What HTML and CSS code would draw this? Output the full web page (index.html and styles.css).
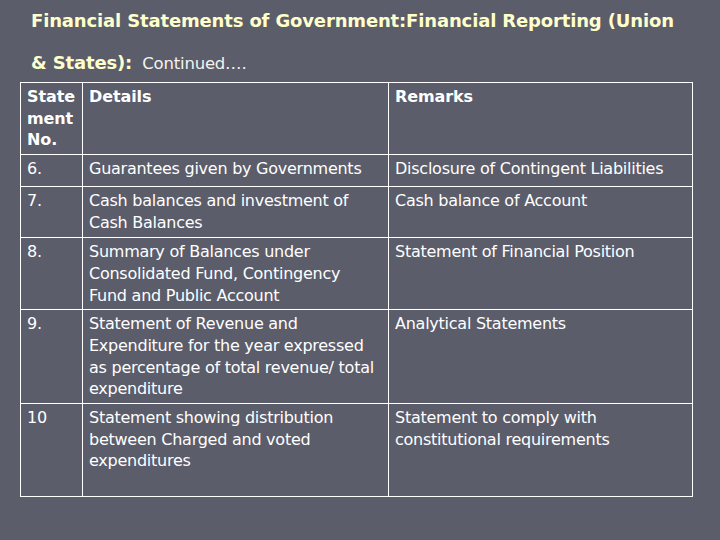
FILE: index.html
```html
<!DOCTYPE html>
<html>
<head>
<meta charset="utf-8">
<link rel="stylesheet" href="styles.css">
</head>
<body>
<div class="slide">
  <h1 class="title">Financial Statements of Government:Financial Reporting (Union<br>&amp; States): <span class="cont">Continued….</span></h1>
  <table class="grid">
    <colgroup><col class="c1"><col class="c2"><col class="c3"></colgroup>
    <tr class="r-head"><th>State<br>ment<br>No.</th><th>Details</th><th>Remarks</th></tr>
    <tr class="r6"><td>6.</td><td>Guarantees given by Governments</td><td>Disclosure of Contingent Liabilities</td></tr>
    <tr class="r7"><td>7.</td><td>Cash balances and investment of<br>Cash Balances</td><td>Cash balance of Account</td></tr>
    <tr class="r8"><td>8.</td><td>Summary of Balances under<br>Consolidated Fund, Contingency<br>Fund and Public Account</td><td>Statement of Financial Position</td></tr>
    <tr class="r9"><td>9.</td><td>Statement of Revenue and<br>Expenditure for the year expressed<br>as percentage of total revenue/ total<br>expenditure</td><td>Analytical Statements</td></tr>
    <tr class="r10"><td>10</td><td>Statement showing distribution<br>between Charged and voted<br>expenditures</td><td>Statement to comply with<br>constitutional requirements</td></tr>
  </table>
</div>
</body>
</html>
```
FILE: styles.css
```css
html, body { margin: 0; padding: 0; }
body {
  width: 720px; height: 540px; overflow: hidden;
  background: #5b5d6b;
  font-family: "DejaVu Sans", Verdana, sans-serif;
}
.slide { padding: 0 0 0 20px; }
.title {
  margin: 0 0 -3px 11px;
  font-size: 18px;
  font-weight: bold;
  line-height: 42px;
  color: #ffffcc;
  letter-spacing: -0.15px;
}
.cont { font-weight: normal; font-size: 16.5px; color: #f4f4ee; letter-spacing: -0.2px; margin-left: 4px; }
.grid {
  border-collapse: collapse;
  width: 673px;
  table-layout: fixed;
  color: #ffffff;
  font-size: 16px;
  line-height: 21.7px;
}
.c1 { width: 62px; }
.c2 { width: 306px; }
.c3 { width: 304px; }
.grid th, .grid td {
  border: 1.5px solid #ffffff;
  vertical-align: top;
  text-align: left;
  padding: 3px 6px 3px 6px;
  letter-spacing: -0.25px;
  white-space: nowrap;
}
.grid th { font-weight: bold; letter-spacing: -0.1px; }
.r-head { height: 71px; }
.r6 { height: 32px; }
.r7 { height: 51px; }
.r8 { height: 72px; }
.r9 { height: 93px; }
.r10 { height: 93px; }
```
